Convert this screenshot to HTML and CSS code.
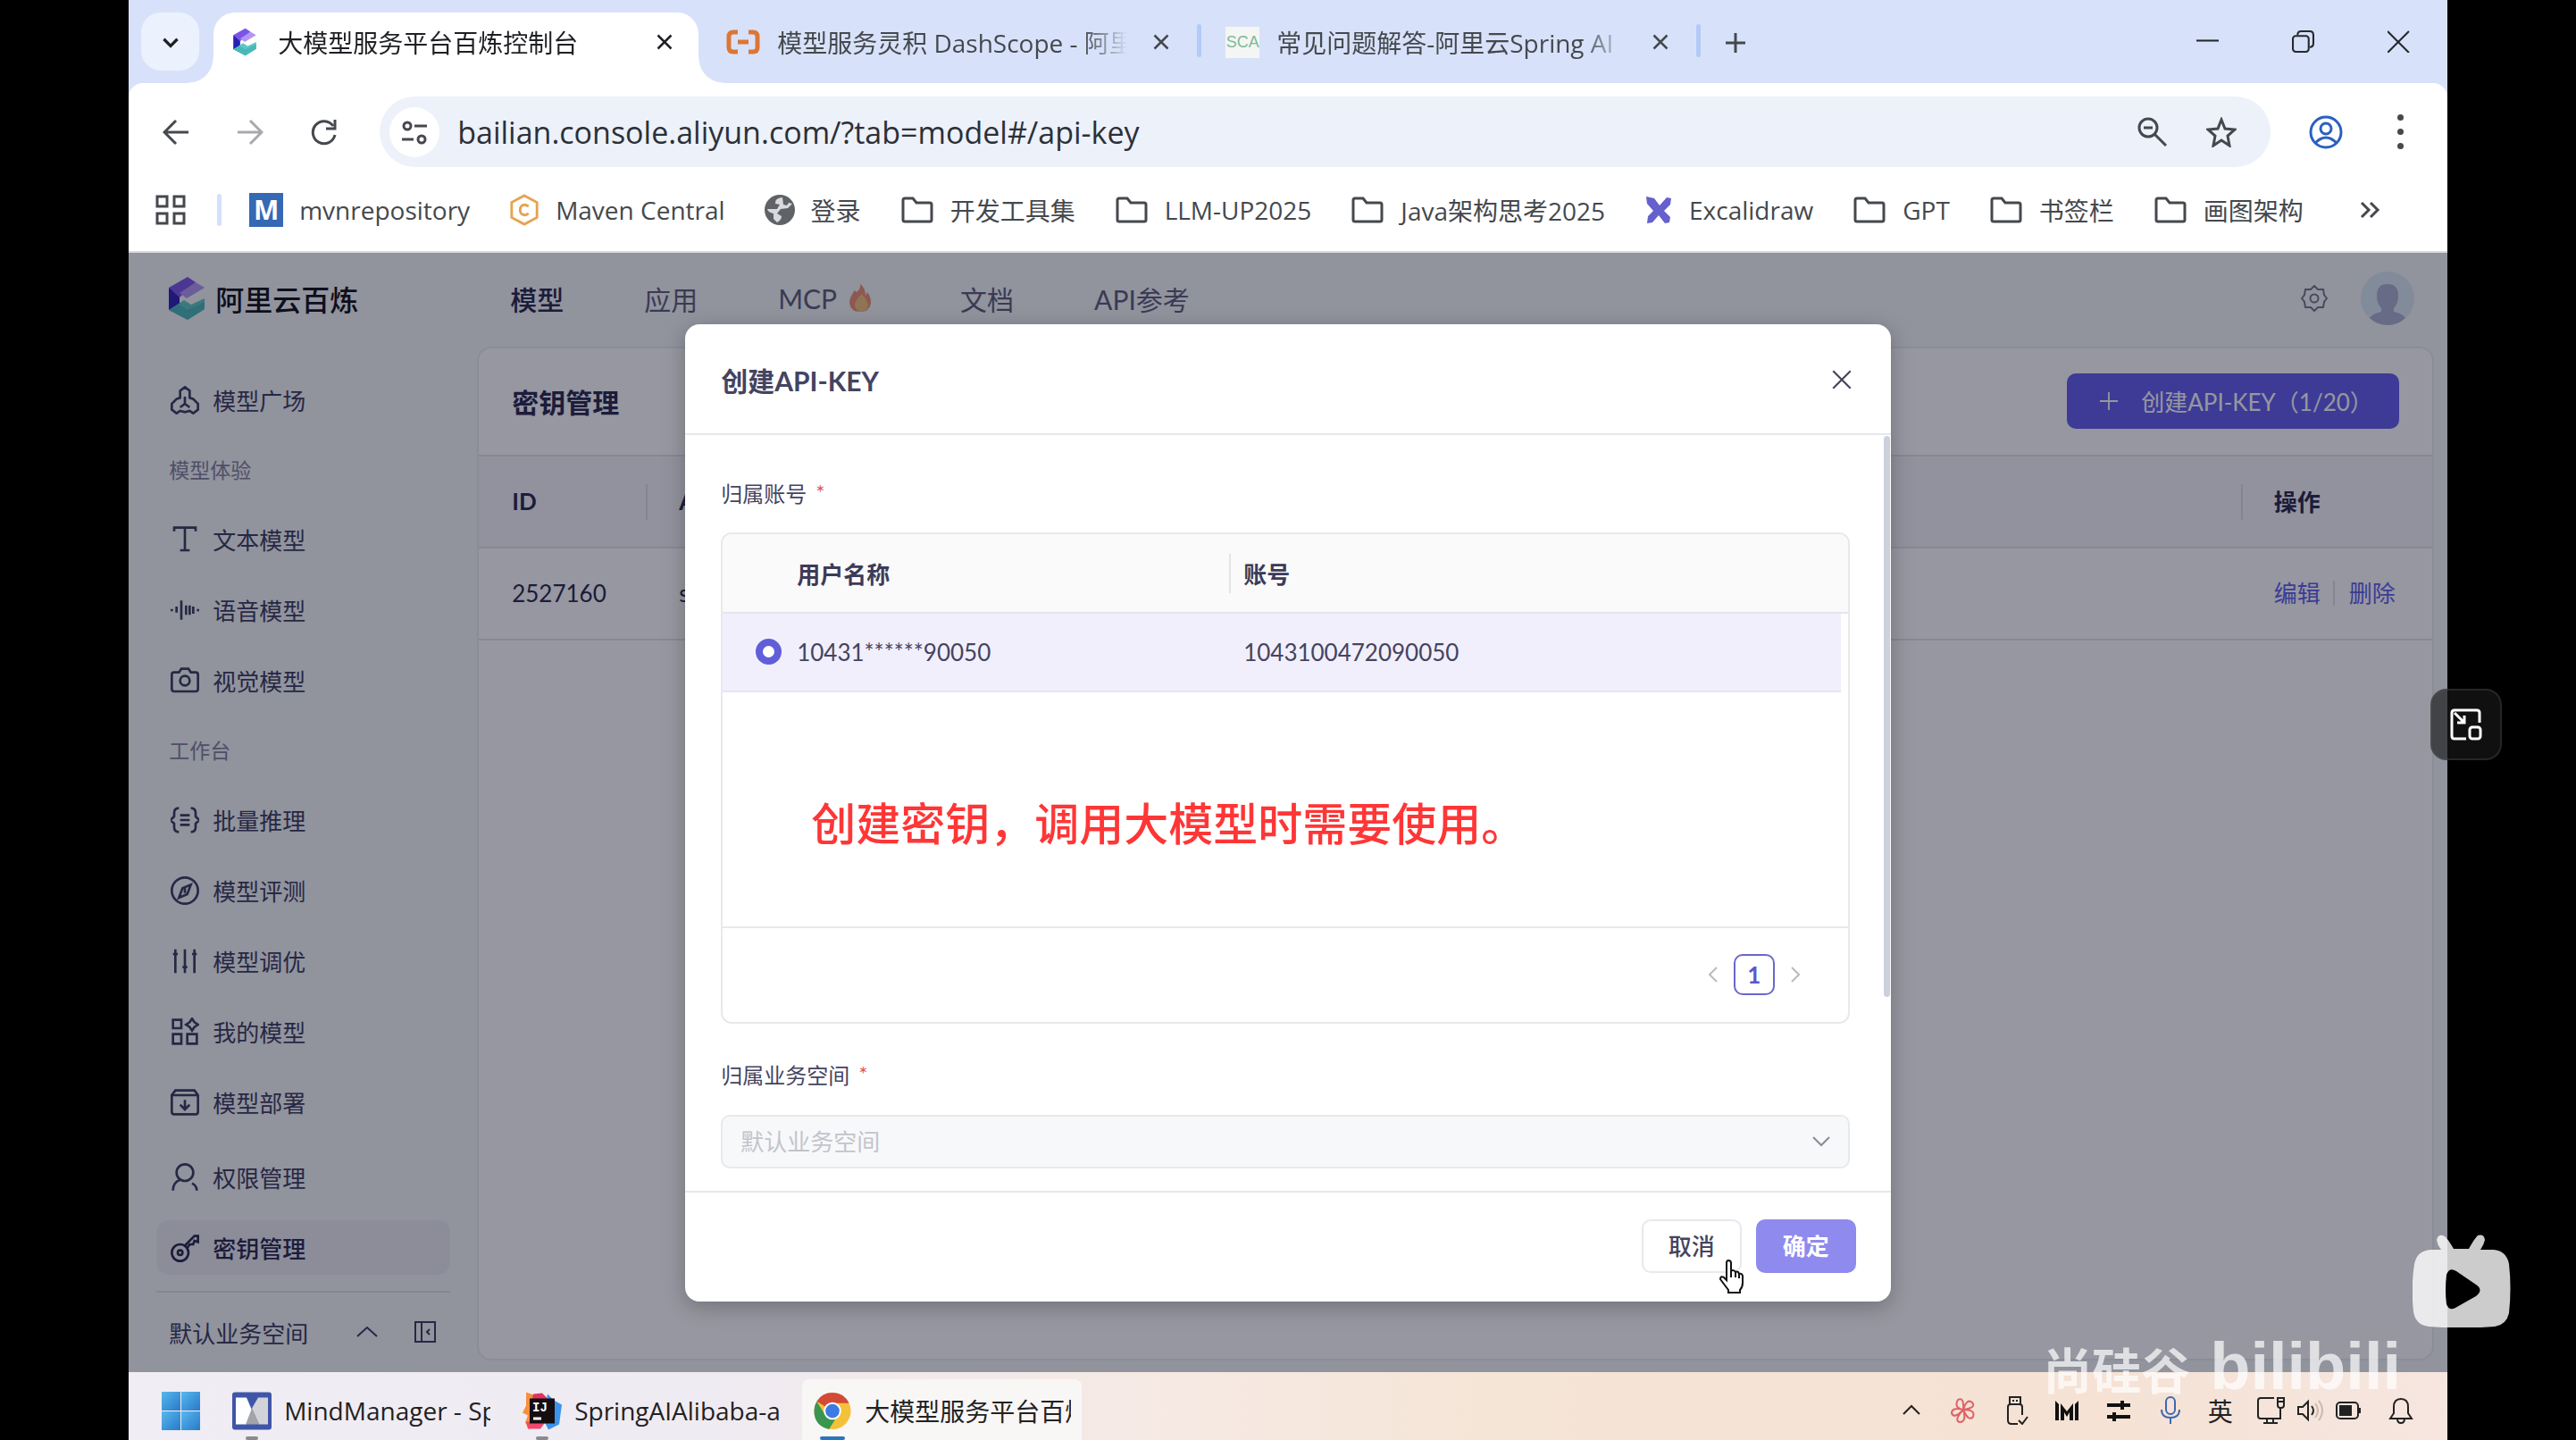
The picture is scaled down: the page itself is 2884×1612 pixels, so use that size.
FILE: index.html
```
<!DOCTYPE html>
<html lang="zh-CN">
<head>
    <meta charset="UTF-8">
    <meta name="viewport" content="width=device-width, initial-scale=1.0">
    <title>大模型服务平台百炼控制台</title>
    <link rel="stylesheet" href="styles.css">
</head>
<body>
    <svg class="sprite" aria-hidden="true">
        <symbol id="folder" viewBox="0 0 38 32"><path d="M3 27V5q0-2 2-2h9l4 5h15q2 0 2 2v17q0 2-2 2H5q-2 0-2-2z"/></symbol>
        <symbol id="close" viewBox="0 0 24 24"><path d="M3 3l18 18M21 3L3 21"/></symbol>
        <symbol id="bailian" viewBox="0 0 42 50">
            <path fill="#2a1fb5" d="M1 13L13 20v12L1 38z"/>
            <path fill="#7a54e8" d="M1 13L22 1l9 6L13 24z"/>
            <path fill="#b296f5" d="M31 7l10 6L21 25 13 19z"/>
            <path fill="#5cc9c4" d="M1 38l17-11 8 5 15-7v12L22 49z"/>
            <path fill="#49b8b8" d="M12 32l10 6 19-9v8L22 49 1 38z"/>
        </symbol>
    </svg>

    <div class="screen">
        <!-- Pestañas del navegador -->
        <header class="tabs">
            <button class="tab-search" aria-label="搜索标签页"><svg viewBox="0 0 24 24"><path d="M5 9l7 7 7-7"/></svg></button>
            <div class="tab tab-active">
                <svg class="favicon"><use href="#bailian"/></svg>
                <span class="tab-title">大模型服务平台百炼控制台</span>
                <button class="tab-close" aria-label="关闭"><svg><use href="#close"/></svg></button>
            </div>
            <div class="tab">
                <svg class="favicon favicon-orange" viewBox="0 0 38 28"><path d="M13 3H8Q3 3 3 8v12q0 5 5 5h5M25 3h5q5 0 5 5v12q0 5-5 5h-5M13 14h12"/></svg>
                <span class="tab-title">模型服务灵积 DashScope - 阿里</span>
                <button class="tab-close" aria-label="关闭"><svg><use href="#close"/></svg></button>
            </div>
            <div class="tab">
                <span class="favicon favicon-sca">SCA</span>
                <span class="tab-title">常见问题解答-阿里云Spring AI</span>
                <button class="tab-close" aria-label="关闭"><svg><use href="#close"/></svg></button>
            </div>
            <button class="tab-new" aria-label="新标签页"><svg viewBox="0 0 24 24"><path d="M12 1v22M1 12h22"/></svg></button>
            <div class="window-buttons">
                <button aria-label="最小化"><svg viewBox="0 0 24 24"><path d="M0 11h24"/></svg></button>
                <button aria-label="还原"><svg viewBox="0 0 24 24"><rect x="1" y="6" width="17" height="17" rx="3"/><path d="M6 5q0-4 4-4h9q4 0 4 4v9q0 4-4 4"/></svg></button>
                <button aria-label="关闭窗口"><svg viewBox="0 0 24 24"><path d="M0 1l23 23M23 1L0 24"/></svg></button>
            </div>
        </header>

        <div class="toolbar">
            <button class="tool" aria-label="后退"><svg viewBox="0 0 30 30"><path d="M29 15H2M15 2L2 15l13 13"/></svg></button>
            <button class="tool tool-off" aria-label="前进"><svg viewBox="0 0 30 30"><path d="M1 15h27M15 2l13 13-13 13"/></svg></button>
            <button class="tool" aria-label="刷新"><svg viewBox="0 0 30 30"><path d="M27 18A12.500 12.500 0 1 1 25 8M27 1v10H17"/></svg></button>
            <div class="address">
                <span class="site-info"><svg viewBox="0 0 30 30"><circle cx="7" cy="8" r="4"/><path d="M15 8h14M1 23h13"/><circle cx="23" cy="23" r="4"/></svg></span>
                <input type="text" aria-label="地址" value="bailian.console.aliyun.com/?tab=model#/api-key">
                <button class="address-icon" aria-label="缩放"><svg viewBox="0 0 34 34"><circle cx="12" cy="12" r="10"/><path d="M19 19l13 13M7 12h10"/></svg></button>
                <button class="address-icon" aria-label="收藏"><svg viewBox="0 0 34 34"><path d="M17 3l4 10 11 1-8 7 2 11-9-6-9 6 2-11-8-7 11-1z"/></svg></button>
            </div>
            <button class="profile" aria-label="个人资料"><svg viewBox="0 0 38 38"><circle cx="19" cy="19" r="17"/><circle cx="19" cy="15" r="6"/><path d="M7 31q12-12 24 0"/></svg></button>
            <button class="more" aria-label="菜单"><i></i><i></i><i></i></button>
        </div>

        <nav class="bookmarks">
            <svg class="apps" viewBox="0 0 34 34"><path d="M2 2h11v11H2zM21 2h11v11H21zM2 21h11v11H2zM21 21h11v11H21z"/></svg>
            <span class="bookmark-line"></span>
            <a href="#"><span class="mvn">M</span>mvnrepository</a>
            <a href="#"><svg class="maven" viewBox="0 0 36 38"><path d="M18 2l15 8v18l-15 8-15-8V10z"/><path d="M23 15q-5-4-9 0-2 4 0 8 4 4 9 0"/></svg>Maven Central</a>
            <a href="#"><svg class="globe" viewBox="0 0 34 34"><circle cx="17" cy="17" r="17"/><path d="M20 3q-9 1-8 7l5 1-3 5H3q1 4 7 5v6l4 4q5-3 5-7l-5-3 4-5 8-1 5-5-4-1-2 3-4-1z"/></svg>登录</a>
            <a href="#"><svg class="folder"><use href="#folder"/></svg>开发工具集</a>
            <a href="#"><svg class="folder"><use href="#folder"/></svg>LLM-UP2025</a>
            <a href="#"><svg class="folder"><use href="#folder"/></svg>Java架构思考2025</a>
            <a href="#"><svg class="excali" viewBox="0 0 32 30"><path d="M2 0l9 2 6 8 8-9 5 1-1 7-7 7 7 7-1 6-5 1-7-9-7 8-6 1 1-8 6-6-7-8z"/></svg>Excalidraw</a>
            <a href="#"><svg class="folder"><use href="#folder"/></svg>GPT</a>
            <a href="#"><svg class="folder"><use href="#folder"/></svg>书签栏</a>
            <a href="#"><svg class="folder"><use href="#folder"/></svg>画图架构</a>
            <button class="bookmarks-more" aria-label="更多书签"><svg viewBox="0 0 24 20"><path d="M3 2l8 8-8 8M13 2l8 8-8 8"/></svg></button>
        </nav>

        <!-- Consola -->
        <div class="page">
            <header class="topbar">
                <div class="brand"><svg><use href="#bailian"/></svg>阿里云百炼</div>
                <nav class="menu">
                    <a href="#" class="current">模型</a>
                    <a href="#">应用</a>
                    <a href="#">MCP<svg viewBox="0 0 24 32"><path fill="#ef8f72" d="M12 0q1 5-4 9L6 7Q0 15 0 21q1 10 12 10t12-10q0-7-4-12l-2 4Q18 4 12 0z"/><path fill="#f2c376" d="M14 11q-8 7-8 13 1 6 7 7 8 0 8-7-1-6-7-13z"/></svg></a>
                    <a href="#">文档</a>
                    <a href="#">API参考</a>
                </nav>
                <svg class="gear" viewBox="0 0 30 30"><path d="M15 1l4 4 6 0 1 6 3 4-3 4-1 6-6 0-4 4-4-4-6 0-1-6-3-4 3-4 1-6 6 0z"/><circle cx="15" cy="15" r="4.500"/></svg>
                <svg class="avatar" viewBox="0 0 60 60"><circle cx="30" cy="30" r="30" fill="#dbe9f5"/><path fill="#abb1d0" d="M30 14q12 0 12 13 0 9-5 14v4q10 2 13 7-9 8-20 8t-20-8q3-5 13-7v-4q-5-5-5-14 0-13 12-13z"/></svg>
            </header>

            <div class="columns">
                <aside class="sidebar">
                    <a href="#"><svg viewBox="0 0 24 24"><path d="M12 1l4 3v6l3 1 4 4v5l-4 3-3-2-4 1-4-1-3 2-4-3v-5l4-4 3-1V4z"/><path d="M12 9v6l-4 3M12 15l4 3"/></svg>模型广场</a>
                    <h3>模型体验</h3>
                    <a href="#"><svg viewBox="0 0 24 24"><path d="M3 5V2h18v3M12 2v19M8 21h8"/></svg>文本模型</a>
                    <a href="#"><svg viewBox="0 0 24 24"><path d="M1 11v2M5 9v5M9 4v16M13 8v8M16 8v8M19 9v6M23 11v2"/></svg>语音模型</a>
                    <a href="#"><svg viewBox="0 0 24 24"><path d="M7 5l2-3h6l2 3h4q2 0 2 2v12q0 2-2 2H3q-2 0-2-2V7q0-2 2-2z"/><circle cx="12" cy="12" r="4"/></svg>视觉模型</a>
                    <h3>工作台</h3>
                    <a href="#"><svg viewBox="0 0 24 24"><path d="M7 2Q3 2 3 6v3l-3 3 3 3v3q0 4 4 4M17 2q4 0 4 4v3l3 3-3 3v3q0 4-4 4M8 8h8M8 12h8M8 16h8"/></svg>批量推理</a>
                    <a href="#"><svg viewBox="0 0 24 24"><circle cx="12" cy="12" r="11"/><path d="M17 7l-3 8-7 3 3-8zM12 10v4"/></svg>模型评测</a>
                    <a href="#"><svg viewBox="0 0 24 24"><path d="M4 2v20M12 2v20M20 2v20M2 6h4M10 17h4M18 6h4"/></svg>模型调优</a>
                    <a href="#"><svg viewBox="0 0 24 24"><path d="M2 2h7v7H2zM2 14h7v8H2zM14 14h8v8h-8zM18 1l2 3 3 2-3 2-2 3-2-3-3-2 3-2z"/></svg>我的模型</a>
                    <a href="#"><svg viewBox="0 0 24 24"><path d="M1 6l3-4h16l3 4v14q0 2-2 2H3q-2 0-2-2V6h22M12 10v8M8 14l4 4 4-4"/></svg>模型部署</a>
                    <a href="#" class="after-gap"><svg viewBox="0 0 24 24"><circle cx="12" cy="8" r="7"/><path d="M2 23q0-7 6-9M18 17q4 2 4 6"/></svg>权限管理</a>
                    <a href="#" class="selected"><svg viewBox="0 0 24 24"><circle cx="8" cy="16" r="7"/><circle cx="8" cy="16" r="2"/><path d="M12 10l8-8 3 0v5l-3-1-1 3-3 0-2 3"/></svg>密钥管理</a>
                    <div class="workspace">
                        <span>默认业务空间</span>
                        <svg viewBox="0 0 24 24"><path d="M1 17l11-10 11 10"/></svg>
                        <svg viewBox="0 0 24 24"><path d="M1 1h22v22H1zM8 1v22M17 9l-3 3 3 3"/></svg>
                    </div>
                </aside>

                <main class="panel">
                    <div class="panel-head">
                        <h1>密钥管理</h1>
                        <button class="create"><svg viewBox="0 0 24 24"><path d="M12 1v22M1 12h22"/></svg>创建API-KEY（1/20）</button>
                    </div>
                    <table class="keys">
                        <thead>
                            <tr><th class="col-id">ID</th><th>API-KEY</th><th class="col-actions">操作</th></tr>
                        </thead>
                        <tbody>
                            <tr>
                                <td>2527160</td>
                                <td>sk-</td>
                                <td><div class="actions"><a href="#">编辑</a><a href="#">删除</a></div></td>
                            </tr>
                        </tbody>
                    </table>
                </main>
            </div>

            <!-- Ventana para crear la clave -->
            <div class="mask">
                <form class="modal" role="dialog" aria-labelledby="modal-title">
                    <header class="modal-head">
                        <h2 id="modal-title">创建API-KEY</h2>
                        <button type="button" class="modal-close" aria-label="关闭"><svg><use href="#close"/></svg></button>
                    </header>
                    <div class="modal-body">
                        <div class="label">归属账号<span class="required">*</span></div>
                        <div class="accounts">
                            <table>
                                <thead>
                                    <tr><th class="col-radio"></th><th class="col-name">用户名称</th><th>账号</th><th class="col-gutter"></th></tr>
                                </thead>
                                <tbody>
                                    <tr>
                                        <td class="col-radio"><input type="radio" id="account" name="account" checked></td>
                                        <td><label for="account">10431******90050</label></td>
                                        <td>1043100472090050</td>
                                        <td class="col-gutter"></td>
                                    </tr>
                                </tbody>
                            </table>
                            <p class="note">创建密钥，调用大模型时需要使用。</p>
                            <div class="pager">
                                <button type="button" aria-label="上一页"><svg viewBox="0 0 12 20"><path d="M10 2l-8 8 8 8"/></svg></button>
                                <button type="button" class="pager-current">1</button>
                                <button type="button" aria-label="下一页"><svg viewBox="0 0 12 20"><path d="M2 2l8 8-8 8"/></svg></button>
                            </div>
                        </div>
                        <label class="label" for="space">归属业务空间<span class="required">*</span></label>
                        <div class="select">
                            <select id="space" disabled><option>默认业务空间</option></select>
                            <svg viewBox="0 0 24 24"><path d="M3 7l9 9 9-9"/></svg>
                        </div>
                        <span class="thumb"></span>
                    </div>
                    <footer class="modal-foot">
                        <button type="button" class="btn">取消</button>
                        <button type="submit" class="btn btn-ok">确定</button>
                        <svg class="cursor" viewBox="0 0 28 38"><path d="M9 23V4q0-3 2-3 3 0 3 3v10q0-2 2-2t3 2q1-1 3 0l1 2q3-1 4 2v8q0 5-3 8v3H11v-3L2 22q0-4 4-2zM14 14v6M19 14v6M23 16v5"/></svg>
                    </footer>
                </form>
            </div>
        </div>

        <!-- Barra de tareas -->
        <footer class="taskbar">
            <button class="start" aria-label="开始"><i></i><i></i><i></i><i></i></button>
            <button class="task">
                <svg viewBox="0 0 44 42"><rect width="44" height="42" rx="3" fill="#3f56a8"/><path fill="#fff" d="M4 6h12l6 14-6 16H4z"/><path fill="#d2d3d8" d="M40 6H29l-7 12 8 18h10z"/><path fill="#a3a4a9" d="M22 18l-7 18h15z"/></svg>
                <span>MindManager - Sp</span>
            </button>
            <button class="task">
                <svg viewBox="0 0 44 42"><path fill="#f7903c" d="M4 0l14 5L8 42l-5-8 3-8-6-3 4-8z"/><path fill="#e0345f" d="M12 2l10-1 6 6-20 16z"/><path fill="#3c93ea" d="M28 2l7 7 9 5-3 22-12 6-6-12z"/><path fill="#f1486d" d="M4 33h22l-6 8H6z"/><rect x="8" y="7" width="28" height="28" fill="#150d10"/><text x="11" y="21" fill="#fff" stroke="none" font-family="Liberation Mono" font-weight="bold" font-size="14">IJ</text><path fill="#fff" d="M12 28h9v3h-9z"/></svg>
                <span>SpringAIAlibaba-at</span>
            </button>
            <button class="task task-active">
                <svg viewBox="0 0 44 44"><circle cx="22" cy="22" r="21" fill="#f5c13b"/><path fill="#d34a36" d="M22 22L4 11Q10 1 22 1q13 0 19 12H22z"/><path fill="#3a9550" d="M4 11l10 16 11 5-7 11Q1 39 1 22q0-6 3-11z"/><circle cx="22" cy="22" r="10" fill="#fff"/><circle cx="22" cy="22" r="8" fill="#3c7ae4"/></svg>
                <span>大模型服务平台百炼</span>
            </button>
            <div class="tray">
                <svg viewBox="0 0 32 32"><path d="M7 20l9-9 9 9"/></svg>
                <svg class="flower" viewBox="0 0 32 32"><path d="M16 15Q5 13 10 4q7-4 6 11Q20 2 26 7q5 6-10 8 14 0 11 8-5 6-11-8 4 14-4 14-7-2 4-14Q6 26 3 19q0-7 13-4z"/></svg>
                <svg viewBox="0 0 32 32"><path d="M10 9V1h12v8M8 12q0-3 3-3h10q3 0 3 3v9M8 12v15q0 4 4 4h7M14 4v2M18 4v2M20 27l4 4 6-8"/></svg>
                <svg class="solid" viewBox="0 0 32 32"><path d="M3 5l4 4v18H3zM9 8l7 9 7-9v19h-4V18l-3 5-3-5v9H9zM25 9l4-4v22h-4z"/></svg>
                <svg class="solid" viewBox="0 0 32 32"><path d="M3 8h15V5h4v3h7v4h-7v3h-4v-3H3zM3 21h6v-3h4v3h16v4H13v3H9v-3H3z"/></svg>
                <svg class="mic" viewBox="0 0 32 32"><rect x="11" y="1" width="10" height="19" rx="5"/><path d="M6 15q0 9 10 9t10-9M16 24v7"/></svg>
                <span>英</span>
                <div class="tray-system">
                    <svg viewBox="0 0 32 32"><path d="M20 2H5Q2 2 2 5v17q0 3 3 3h22V13M12 25v5M19 25v5M8 30h16M24 2h7v8q0 3-3 3h-1q-3 0-3-3zM24 6h7"/></svg>
                    <svg viewBox="0 0 32 32"><path d="M3 12h5l6-6v20l-6-6H3zM18 11q4 5 0 10"/><path class="faint" d="M22 8q6 8 0 16M26 5q8 11 0 22"/></svg>
                    <svg viewBox="0 0 32 32"><rect x="2" y="7" width="24" height="18" rx="4"/><path fill="#222" d="M6 11h12v10H6zM28 13v6"/></svg>
                </div>
                <svg viewBox="0 0 32 32"><path d="M4 25l4-6v-7q0-9 8-9t8 9v7l4 6zM12 25q0 5 4 5t4-5"/></svg>
            </div>
        </footer>
    </div>

    <!-- Elementos flotantes del reproductor -->
    <div class="watermark"><span>尚硅谷</span><b>bilibili</b></div>
    <button class="pip" aria-label="画中画"><svg viewBox="0 0 36 36"><path d="M33 16V5q0-3-3-3H5Q2 2 2 5v26q0 3 3 3h13M5 5l11 11M16 8v8H8"/><rect x="22" y="21" width="12" height="13" rx="3"/></svg></button>
    <svg class="player" viewBox="0 0 110 104"><path d="M27 6q2-8 9-4 3 2 10 14h17Q69 5 73 1q7-2 8 5-1 5-5 11h14q15 1 18 16 3 27 0 55-3 13-16 15-37 3-74 0Q3 101 1 86q-3-27 1-53 3-15 18-16h12q-4-5-5-11z"/><path class="play" d="M38 45q3-9 11-4l22 15q9 6 0 13L48 82q-7 4-10-4-2-15 0-33z"/></svg>
</body>
</html>
```
FILE: styles.css
```
* {
    box-sizing: border-box;
}

body {
    margin: 0;
    height: 100vh;
    padding: 0 5%;
    overflow: hidden;
    position: relative;
    background-color: #000;
    font-family: Lato, "Noto Sans CJK SC", sans-serif;
    font-size: 26px;
    color: #26244c;
}

h1, h2, h3, p {
    margin: 0;
}

a {
    color: inherit;
    text-decoration: none;
}

button, input, select {
    font: inherit;
    color: inherit;
    margin: 0;
    padding: 0;
    border: none;
    background: none;
}

svg {
    display: block;
    flex: none;
    fill: none;
    stroke: currentColor;
    stroke-width: 2;
}

.sprite {
    position: absolute;
    width: 0;
    height: 0;
}

.screen {
    display: flex;
    flex-direction: column;
    height: 100%;
    background-color: #d7e2fa;
}

.tabs, .toolbar, .bookmarks, .taskbar {
    font-family: "Open Sans", "Noto Sans CJK SC", sans-serif;
    font-size: 28px;
    color: #45484d;
    flex: none;
    display: flex;
    align-items: center;
}

/* Pestañas */
.tabs {
    height: 93px;
    padding-left: 14px;
    align-items: flex-start;
    padding-top: 14px;
}

.tab-search {
    width: 65px;
    height: 65px;
    margin-right: 16px;
    border-radius: 22px;
    background-color: #ebf2fd;
    display: flex;
    align-items: center;
    justify-content: center;
    color: #1f2024;
}

.tab-search svg {
    width: 26px;
    height: 26px;
    stroke-width: 3;
}

.tab {
    position: relative;
    width: 559px;
    height: 66px;
    padding: 0 35px 0 27px;
    display: flex;
    align-items: center;
}

.tab:not(.tab-active)::after {
    content: "";
    position: absolute;
    right: 0;
    top: 13px;
    width: 5px;
    height: 37px;
    border-radius: 3px;
    background-color: #b3cbf6;
}

.tab-active {
    width: 543px;
    height: 79px;
    margin-right: 4px;
    padding: 0 28px 13px 20px;
    border-radius: 24px 24px 0 0;
    background-color: #fff;
    color: #1f2024;
}

.tab-active::before, .tab-active::after {
    content: "";
    position: absolute;
    bottom: 0;
    width: 28px;
    height: 28px;
}

.tab-active::before {
    left: -28px;
    background: radial-gradient(circle at 0 0, transparent 27px, #fff 28px);
}

.tab-active::after {
    right: -28px;
    background: radial-gradient(circle at 100% 0, transparent 27px, #fff 28px);
}

.favicon {
    width: 38px;
    height: 35px;
    margin-right: 19px;
    flex: none;
}

.tab-active .favicon {
    width: 30px;
    height: 32px;
    margin-right: 22px;
    stroke: none;
}

.favicon-orange {
    height: 28px;
    color: #dd7635;
    stroke-width: 5;
}

.favicon-sca {
    background-color: #f4f6f5;
    color: #7fba95;
    font-family: "Liberation Sans", sans-serif;
    font-size: 18px;
    line-height: 35px;
    text-align: center;
}

.tab-title {
    flex: 1;
    overflow: hidden;
    white-space: nowrap;
    margin-right: 28px;
    -webkit-mask-image: linear-gradient(to left, transparent, #000 50px);
    mask-image: linear-gradient(to left, transparent, #000 50px);
}

.tab-close svg {
    width: 20px;
    height: 20px;
    stroke-width: 3;
}

.tab-new {
    margin: 22px 0 0 27px;
}

.tab-new svg {
    width: 24px;
    height: 24px;
    stroke-width: 3;
}

.window-buttons {
    display: flex;
    gap: 82px;
    margin: 20px 42px 0 auto;
    color: #26282c;
}

.window-buttons svg {
    width: 25px;
    height: 25px;
}

/* Barra de direcciones */
.toolbar {
    height: 109px;
    padding: 0 49px 0 38px;
    border-radius: 16px 16px 0 0;
    background-color: #fff;
}

.tool {
    margin-right: 53px;
}

.tool svg {
    width: 30px;
    height: 30px;
    stroke-width: 3;
}

.tool-off {
    color: #a8a9ad;
}

.address {
    flex: 1;
    height: 79px;
    margin-right: 43px;
    padding: 0 38px 0 11px;
    border-radius: 40px;
    background-color: #edf1f9;
    display: flex;
    align-items: center;
}

.tool + .address {
    margin-left: -6px;
}

.site-info {
    width: 56px;
    height: 56px;
    border-radius: 50%;
    background-color: #fff;
    display: flex;
    align-items: center;
    justify-content: center;
    margin-right: 20px;
}

.site-info svg {
    width: 30px;
    height: 30px;
    stroke-width: 3;
}

.address input {
    flex: 1;
    font-size: 34px;
    color: #2c3038;
}

.address-icon {
    margin-left: 43px;
}

.address-icon svg {
    width: 34px;
    height: 34px;
    stroke-width: 3;
}

.profile {
    color: #2a60c0;
    margin-right: 61px;
}

.profile svg {
    width: 38px;
    height: 38px;
    stroke-width: 3;
}

.more {
    display: grid;
    gap: 9px;
}

.more i {
    width: 7px;
    height: 7px;
    border-radius: 50%;
    background-color: #45484d;
}

/* Marcadores */
.bookmarks {
    height: 81px;
    padding: 0 0 14px 30px;
    border-bottom: 2px solid #d9dbe0;
    background-color: #fff;
    white-space: nowrap;
}

.bookmarks a {
    display: flex;
    align-items: center;
    gap: 18px;
    margin-right: 44px;
}

.apps {
    width: 34px;
    height: 34px;
    stroke-width: 3;
}

.bookmark-line {
    width: 5px;
    height: 36px;
    border-radius: 3px;
    background-color: #d3e1fb;
    margin: 0 31px 0 35px;
}

.mvn {
    width: 38px;
    height: 38px;
    background-color: #3568b5;
    color: #fff;
    font-weight: bold;
    font-size: 30px;
    line-height: 38px;
    text-align: center;
}

.maven {
    width: 34px;
    height: 38px;
    color: #e5a351;
    stroke-width: 3;
}

.globe {
    width: 34px;
    height: 34px;
    stroke: none;
    fill: #5f6368;
}

.globe path {
    fill: #d9dadd;
}

.folder {
    width: 38px;
    height: 32px;
    stroke-width: 3;
}

.excali {
    width: 32px;
    height: 30px;
    stroke: none;
    fill: #6560cc;
}

.bookmarks-more {
    margin-left: 18px;
}

.bookmarks-more svg {
    width: 24px;
    height: 20px;
    stroke-width: 3;
}

/* Consola */
.page {
    position: relative;
    flex: 1;
    min-height: 0;
    display: flex;
    flex-direction: column;
    padding: 0 15px 13px 0;
    background-color: #f7f8fa;
}

.topbar {
    height: 105px;
    padding: 0 0 4px 44px;
    display: flex;
    align-items: center;
    font-size: 30px;
}

.brand {
    width: 383px;
    display: flex;
    align-items: center;
    gap: 11px;
    font-size: 32px;
    font-weight: 500;
    color: #0d0d14;
}

.brand svg {
    width: 42px;
    height: 50px;
    stroke: none;
}

.menu {
    flex: 1;
    display: flex;
    gap: 90px;
    color: #5c5b78;
}

.menu a {
    display: flex;
    align-items: center;
}

.menu .current {
    color: #26244c;
    font-weight: 500;
}

.menu svg {
    width: 24px;
    height: 32px;
    margin: 0 10px 0 14px;
    stroke: none;
}

.gear {
    width: 30px;
    height: 30px;
    color: #77778f;
}

.avatar {
    width: 60px;
    height: 62px;
    margin: 0 22px 0 37px;
    stroke: none;
}

.columns {
    flex: 1;
    min-height: 0;
    display: flex;
}

.sidebar {
    width: 390px;
    padding: 29px 30px 0 31px;
    color: #3a395c;
}

.sidebar a {
    display: flex;
    align-items: center;
    gap: 15px;
    height: 61px;
    margin-bottom: 18px;
    padding-left: 16px;
    border-radius: 14px;
}

.sidebar a svg {
    width: 32px;
    height: 32px;
}

.sidebar h3 {
    height: 59px;
    margin-bottom: 18px;
    padding-left: 14px;
    line-height: 61px;
    font-size: 23px;
    font-weight: normal;
    color: #81809b;
}

.sidebar .after-gap {
    margin-top: 23px;
}

.sidebar .selected {
    background-color: #edeef2;
    color: #26244c;
    font-weight: 500;
}

.workspace {
    display: flex;
    align-items: center;
    height: 90px;
    padding: 0 16px 0 14px;
    border-top: 2px solid #dfe0e6;
}

.workspace span {
    flex: 1;
}

.workspace svg {
    width: 24px;
    height: 24px;
    margin-left: 41px;
}

.panel {
    flex: 1;
    border: 2px solid #eaebf0;
    border-radius: 16px;
    background-color: #fff;
}

.panel-head {
    display: flex;
    align-items: center;
    justify-content: space-between;
    height: 119px;
    padding: 0 37px 2px;
}

.panel-head h1 {
    font-size: 30px;
}

.create {
    display: flex;
    align-items: center;
    gap: 25px;
    height: 62px;
    padding: 0 29px 0 36px;
    border-radius: 10px;
    background-color: #615ced;
    color: #fff;
}

.create svg {
    width: 22px;
    height: 22px;
}

.keys {
    width: 100%;
    table-layout: fixed;
    border-collapse: collapse;
    text-align: left;
}

.keys th, .keys td {
    height: 103px;
    padding: 0 37px 2px;
    border-top: 2px solid #e4e5ec;
}

.keys td {
    border-bottom: 2px solid #e4e5ec;
}

.keys th {
    position: relative;
    background-color: #f7f7f9;
}

.keys th + th::before {
    content: "";
    position: absolute;
    left: 0;
    top: 31px;
    width: 2px;
    height: 40px;
    background-color: #dedfe8;
}

.col-id {
    width: 187px;
}

.col-actions {
    width: 214px;
}

.actions {
    display: flex;
    white-space: nowrap;
    color: #615ced;
}

.actions a + a {
    margin-left: 14px;
    padding-left: 16px;
    border-left: 2px solid #dedfe8;
}

.actions a {
    line-height: 28px;
}

/* Ventana modal */
.mask {
    position: absolute;
    inset: 0;
    display: flex;
    align-items: center;
    justify-content: center;
    background-color: rgba(16, 18, 39, 0.44);
}

.modal {
    width: 52%;
    border-radius: 16px;
    background-color: #fff;
    box-shadow: 0 6px 24px rgba(0, 0, 0, 0.25);
    color: #45445f;
}

.modal-head {
    display: flex;
    align-items: center;
    justify-content: space-between;
    height: 124px;
    padding: 2px 42px 0 40px;
    border-bottom: 2px solid #e8e8ec;
}

.modal-head h2 {
    font-size: 30px;
}

.modal-close svg {
    width: 26px;
    height: 26px;
}

.modal-body {
    position: relative;
    padding: 45px 46px 25px 40px;
}

.label {
    display: flex;
    font-size: 24px;
    line-height: 42px;
}

.required {
    margin-left: 10px;
    line-height: 38px;
    color: #e05555;
}

.accounts {
    margin: 22px 0 37px;
    border: 2px solid #e8e9ed;
    border-radius: 12px;
    overflow: hidden;
}

.accounts table {
    width: 100%;
    table-layout: fixed;
    border-collapse: collapse;
    text-align: left;
}

.accounts th, .accounts td {
    height: 88px;
    padding: 0 0 0 16px;
    border-bottom: 2px solid #e6e6ee;
}

.accounts th {
    position: relative;
    background-color: #fafafa;
    color: #3c3b58;
}

.accounts td {
    background-color: #f1effc;
}

.accounts .col-radio {
    width: 67px;
    padding-left: 37px;
}

.accounts .col-name {
    width: 500px;
}

.accounts .col-name + th::before {
    content: "";
    position: absolute;
    left: 0;
    top: 22px;
    width: 2px;
    height: 44px;
    background-color: #e4e4e8;
}

.accounts .col-gutter {
    width: 8px;
    padding: 0;
}

.accounts td.col-gutter {
    background-color: #fff;
    border: none;
}

.accounts input {
    appearance: none;
    display: block;
    width: 29px;
    height: 29px;
    border: 8px solid #615ed9;
    border-radius: 50%;
    background-color: #fff;
}

.note {
    height: 264px;
    padding: 107px 0 0 99px;
    border-bottom: 2px solid #e8e9ed;
    font-size: 50px;
    font-weight: 500;
    line-height: 80px;
    color: #ff3636;
}

.pager {
    display: flex;
    align-items: center;
    justify-content: flex-end;
    gap: 17px;
    height: 105px;
    padding-right: 53px;
    color: #b9bac4;
}

.pager svg {
    width: 12px;
    height: 20px;
}

.pager-current {
    width: 46px;
    height: 46px;
    border: 2px solid #6b67c9;
    border-radius: 10px;
    color: #5c58cc;
    font-weight: bold;
}

.select {
    position: relative;
    margin-top: 23px;
}

.select select {
    appearance: none;
    width: 100%;
    height: 60px;
    padding: 0 20px;
    border: 2px solid #e8e9ee;
    border-radius: 10px;
    background-color: #f7f8fa;
    color: #c3c4cb;
    opacity: 1;
}

.select svg {
    position: absolute;
    right: 20px;
    top: 18px;
    width: 24px;
    height: 24px;
    color: #8b8c98;
}

.thumb {
    position: absolute;
    right: 1px;
    top: 1px;
    width: 7px;
    height: 628px;
    border-radius: 4px;
    background-color: #cdd1de;
}

.modal-foot {
    position: relative;
    display: flex;
    justify-content: flex-end;
    gap: 16px;
    padding: 30px 39px 32px;
    border-top: 2px solid #e8e8ec;
}

.btn {
    width: 112px;
    height: 60px;
    padding-bottom: 2px;
    border: 2px solid #e8e8ee;
    border-radius: 10px;
    font-weight: 500;
}

.btn-ok {
    border-color: #8f8aee;
    background-color: #8f8aee;
    color: #fff;
    font-weight: bold;
}

.cursor {
    position: absolute;
    right: 165px;
    bottom: 9px;
    width: 28px;
    height: 38px;
    fill: #fff;
    color: #111;
}

/* Barra de tareas */
.taskbar {
    height: 76px;
    padding-left: 37px;
    align-items: stretch;
    background: linear-gradient(to right, #f0edf4, #efebf2 25%, #f6e9e3 45%, #f5e5d6 60%, #f5e2d5 85%, #f6e6df);
    color: #222;
}

.start {
    display: grid;
    grid-template-columns: 21px 21px;
    grid-auto-rows: 21px;
    gap: 1px;
    align-content: center;
    margin: 10px 24px 0 0;
}

.start i {
    background: linear-gradient(135deg, #58b8ec, #2879c9);
}

.task {
    position: relative;
    display: flex;
    align-items: center;
    gap: 14px;
    width: 313px;
    margin: 8px 12px 0 0;
    padding: 2px 12px 0;
    border-radius: 8px 8px 0 0;
}

.task svg {
    width: 44px;
    height: 43px;
    stroke: none;
}

.task span {
    flex: 1;
    overflow: hidden;
    white-space: nowrap;
    text-align: left;
}

.task::after {
    content: "";
    position: absolute;
    left: 27px;
    bottom: 0;
    width: 14px;
    height: 4px;
    border-radius: 3px;
    background-color: #8a8a8f;
}

.task-active {
    background-color: #f9f6f6;
}

.task-active::after {
    left: 20px;
    width: 28px;
    background-color: #2a74bb;
}

.tray {
    margin: 10px 36px 0 auto;
    display: flex;
    align-items: center;
    gap: 26px;
}

.tray-system {
    display: flex;
    gap: 12px;
}

.tray svg {
    width: 32px;
    height: 32px;
}

.tray .solid {
    fill: #111;
    stroke: none;
}

.tray .flower {
    color: #dc6468;
}

.tray .mic {
    color: #3d68b5;
}

.tray .faint {
    stroke: #c9b9ae;
}

/* Reproductor */
.watermark {
    position: absolute;
    right: 196px;
    bottom: 38px;
    display: flex;
    align-items: baseline;
    gap: 22px;
    font-size: 55px;
    line-height: 80px;
    font-weight: bold;
    color: rgba(255, 255, 255, 0.7);
}

.watermark b {
    font-family: "Liberation Sans", sans-serif;
    font-size: 74px;
}

.pip {
    position: absolute;
    right: 83px;
    top: 771px;
    width: 80px;
    height: 80px;
    display: flex;
    align-items: center;
    justify-content: center;
    border: 2px solid rgba(90, 90, 90, 0.3);
    border-radius: 18px;
    background-color: rgba(24, 24, 24, 0.65);
    color: #fff;
}

.pip svg {
    width: 36px;
    height: 36px;
    stroke-width: 3;
}

.player {
    position: absolute;
    right: 73px;
    bottom: 126px;
    width: 110px;
    height: 104px;
    stroke: none;
    fill: rgba(255, 255, 255, 0.8);
}

.player .play {
    fill: #000;
}
```
